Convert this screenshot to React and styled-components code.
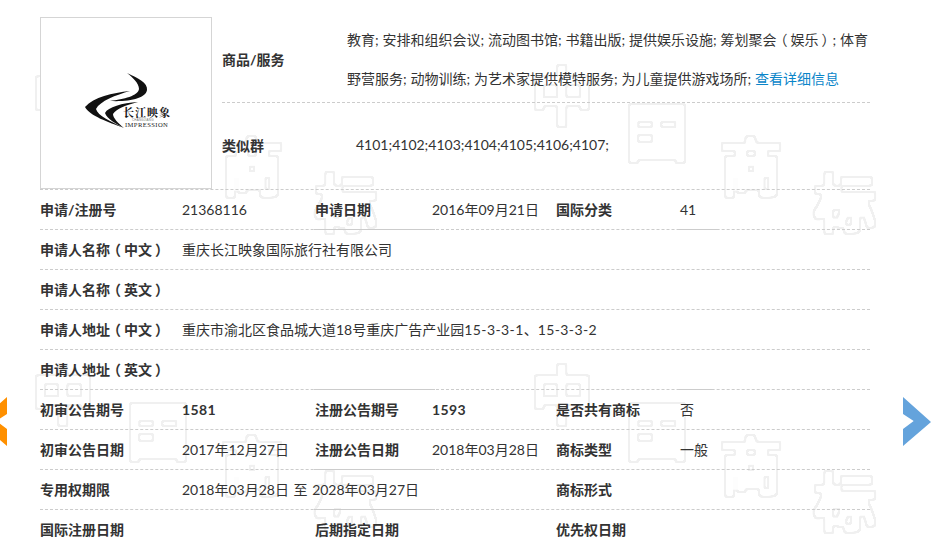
import React from 'react';
import styled, { createGlobalStyle } from 'styled-components';

const GlobalStyle = createGlobalStyle`
  html, body { margin: 0; padding: 0; background: #fff; }
  body {
    font-family: Lato, "Noto Sans CJK SC", "Noto Sans", sans-serif;
    font-size: 14px;
    color: #333;
  }
`;

const Page = styled.div`
  position: relative;
  width: 931px;
  height: 548px;
  overflow: hidden;
  background: #fff;
`;

const Watermark = styled.svg`
  position: absolute;
  left: 0;
  top: 0;
  width: 931px;
  height: 548px;
`;

const Content = styled.div`
  position: relative;
  width: 830px;
  margin-left: 40px;
  padding-top: 17px;
`;

const Summary = styled.div`
  display: flex;
  height: 172px;
  border-bottom: 1px dashed #ccc;
`;

const LogoBox = styled.div`
  width: 170px;
  height: 170px;
  border: 1px solid #d5d5d5;
  background: #fff;
  display: flex;
  align-items: center;
  justify-content: center;
  flex: none;
`;

const SummaryBody = styled.div`
  margin-left: 10px;
  flex: 1;
  display: flex;
  flex-direction: column;
`;

const GoodsRow = styled.div`
  height: 85px;
  display: flex;
  align-items: flex-start;
  border-bottom: 1px dashed #ccc;
`;

const GroupRow = styled.div`
  flex: 1;
  display: flex;
  align-items: center;
  padding-bottom: 3px;
`;

const SummaryLabel = styled.div`
  width: ${(p) => p.$width}px;
  flex: none;
  font-weight: 700;
  ${(p) => p.$top && `padding-top: ${p.$top}px;`}
`;

const GoodsText = styled.div`
  padding-top: 3px;
  line-height: 39px;
  white-space: nowrap;
  word-spacing: 0.25px;
`;

const MoreLink = styled.a`
  color: #0a85c9;
  text-decoration: none;
`;

const Row = styled.div`
  display: flex;
  height: 39px;
  line-height: 40px;
  border-bottom: ${(p) => (p.$last ? 'none' : '1px dashed #ccc')};
`;

const Cell = styled.div`
  width: ${(p) => p.$width}px;
  flex: none;
  white-space: nowrap;
  font-weight: ${(p) => (p.$bold ? 700 : 400)};
`;

const Wide = styled.div`
  flex: 1;
  white-space: nowrap;
`;

const Tracked = styled.span`
  letter-spacing: ${(p) => p.$gap}px;
`;

const DateRange = styled.span`
  word-spacing: 1px;
`;

// full-width brackets sit centred in the reference's font
const Paren = styled.span`
  display: inline-block;
  transform: translateX(${(p) => p.$shift}px);
`;

const Seg = styled.i`
  position: absolute;
  left: ${(p) => p.$x}px;
  top: ${(p) => p.$y}px;
  width: ${(p) => p.$w}px;
  height: 1px;
  background: #ccc;
`;

const Arrow = styled.svg`
  position: absolute;
  top: 397px;
  left: ${(p) => p.$left}px;
`;

const tiles = [
  [0, 0],
  [499, 0],
  [0, 299],
  [499, 299],
];

function Logo() {
  return (
    <svg width="92" height="62" viewBox="0 0 92 62">
      <path d="M47 1 C58 6 68 11 67 18 C66 26 50 30 30 29 C44 27 58 24 59 17 C59 11 52 5 47 1Z" fill="#111" />
      <path d="M50 19 C32 21 14 25 5 35 C10 44 28 50 44 56 C30 49 18 44 16 37 C20 29 36 23 50 19Z" fill="#111" />
      <path d="M58 30 C42 31 28 35 25 41 C27 47 36 52 44 56 C38 51 33 46 33 42 C36 37 46 33 58 30Z" fill="#111" />
      <text x="43" y="45" fontFamily='"Noto Serif CJK SC", serif' fontSize="11" fontWeight="700" letterSpacing="1" fill="#111">长江映象</text>
      <text x="52" y="49" fontFamily='"Liberation Sans", sans-serif' fontSize="3" letterSpacing="0.2" fill="#777">CHANGJIANG</text>
      <text x="45" y="55" fontFamily='"Liberation Serif", serif' fontSize="6.6" letterSpacing="0.4" fill="#222">IMPRESSION</text>
    </svg>
  );
}

const paths = {
  left: 'M28 0 L0 25 L28 49 L28 32 L17.3 24 L28 17 Z',
  right: 'M0 0 L28 25 L0 49 L0 32 L10.7 24 L0 17 Z',
};

const Chevron = ({ side, left, color }) => (
  <Arrow $left={left} width="28" height="50" viewBox="0 0 28 50">
    <path d={paths[side]} fill={color} />
  </Arrow>
);

const Bracketed = ({ children }) => (
  <>
    {children[0]}
    <Paren $shift={-3}>（</Paren>
    {children[1]}
    <Paren $shift={3}>）</Paren>
  </>
);

export default function App() {
  return (
    <Page>
      <GlobalStyle />
      <Watermark viewBox="0 0 931 548">
        <defs>
          <filter id="ring" x="-5%" y="-5%" width="110%" height="110%" colorInterpolationFilters="sRGB">
            <feMorphology in="SourceAlpha" operator="dilate" radius="2.5" result="fat" />
            <feGaussianBlur in="fat" stdDeviation="1" result="soft" />
            <feComponentTransfer in="soft" result="outer">
              <feFuncA type="linear" slope="12" intercept="-5" />
            </feComponentTransfer>
            <feMorphology in="outer" operator="erode" radius="1.5" result="inner" />
            <feComposite in="outer" in2="inner" operator="out" result="band" />
            <feFlood floodColor="#f0f0f0" />
            <feComposite in2="band" operator="in" />
          </filter>
        </defs>
        {tiles.map(([ox, oy]) => (
          <text
            key={`${ox}-${oy}`}
            filter="url(#ring)"
            x={[32, 127, 221, 315].map((v) => v + ox).join(' ')}
            y={[120, 156, 191, 227].map((v) => v + oy).join(' ')}
            fontFamily='"Noto Sans CJK SC", sans-serif'
            fontSize="62"
            fontWeight="400"
          >
            中国商标
          </text>
        ))}
      </Watermark>
      <Content>
        <Summary>
          <LogoBox>
            <Logo />
          </LogoBox>
          <SummaryBody>
            <GoodsRow>
              <SummaryLabel $width={125} $top={32}>商品/服务</SummaryLabel>
              <GoodsText>
                教育; 安排和组织会议; 流动图书馆; 书籍出版; 提供娱乐设施; 筹划聚会<Paren $shift={-3}>（</Paren>娱乐<Paren $shift={3}>）</Paren>; 体育
                <br />
                野营服务; 动物训练; 为艺术家提供模特服务; 为儿童提供游戏场所; <MoreLink href="#">查看详细信息</MoreLink>
              </GoodsText>
            </GoodsRow>
            <GroupRow>
              <SummaryLabel $width={134}>类似群</SummaryLabel>
              <span>4101;4102;4103;4104;4105;4106;4107;</span>
            </GroupRow>
          </SummaryBody>
        </Summary>
        <Row>
          <Cell $width={142} $bold>申请/注册号</Cell>
          <Cell $width={133}>21368116</Cell>
          <Cell $width={117} $bold>申请日期</Cell>
          <Cell $width={124}>2016年09月21日</Cell>
          <Cell $width={124} $bold>国际分类</Cell>
          <Wide>41</Wide>
        </Row>
        <Row>
          <Cell $width={142} $bold><Bracketed>{['申请人名称', '中文']}</Bracketed></Cell>
          <Wide>重庆长江映象国际旅行社有限公司</Wide>
        </Row>
        <Row>
          <Cell $width={142} $bold><Bracketed>{['申请人名称', '英文']}</Bracketed></Cell>
        </Row>
        <Row>
          <Cell $width={142} $bold><Bracketed>{['申请人地址', '中文']}</Bracketed></Cell>
          <Wide>重庆市渝北区食品城大道18号重庆广告产业园<Tracked $gap={0.4}>15-3-3-1</Tracked>、<Tracked $gap={0.4}>15-3-3-2</Tracked></Wide>
        </Row>
        <Row>
          <Cell $width={142} $bold><Bracketed>{['申请人地址', '英文']}</Bracketed></Cell>
        </Row>
        <Row>
          <Cell $width={142} $bold>初审公告期号</Cell>
          <Cell $width={133} $bold><Tracked $gap={0.4}>1581</Tracked></Cell>
          <Cell $width={117} $bold>注册公告期号</Cell>
          <Cell $width={124} $bold><Tracked $gap={0.4}>1593</Tracked></Cell>
          <Cell $width={124} $bold>是否共有商标</Cell>
          <Wide>否</Wide>
        </Row>
        <Row>
          <Cell $width={142} $bold>初审公告日期</Cell>
          <Cell $width={133}>2017年12月27日</Cell>
          <Cell $width={117} $bold>注册公告日期</Cell>
          <Cell $width={124}>2018年03月28日</Cell>
          <Cell $width={124} $bold>商标类型</Cell>
          <Wide>一般</Wide>
        </Row>
        <Row>
          <Cell $width={142} $bold>专用权期限</Cell>
          <Cell $width={374}><DateRange>2018年03月28日 至 2028年03月27日</DateRange></Cell>
          <Cell $width={124} $bold>商标形式</Cell>
        </Row>
        <Row $last>
          <Cell $width={142} $bold>国际注册日期</Cell>
          <Cell $width={133} />
          <Cell $width={241} $bold>后期指定日期</Cell>
          <Cell $width={124} $bold>优先权日期</Cell>
        </Row>
      </Content>
      <Seg $x={314} $y={229} $w={121} />
      <Seg $x={678} $y={229} $w={40} />
      <Seg $x={314} $y={389} $w={121} />
      <Seg $x={678} $y={389} $w={35} />
      <Seg $x={314} $y={469} $w={121} />
      <Seg $x={314} $y={509} $w={121} />
      <Chevron side="left" left={-21} color="#ff9000" />
      <Chevron side="right" left={903} color="#64a3dc" />
    </Page>
  );
}
